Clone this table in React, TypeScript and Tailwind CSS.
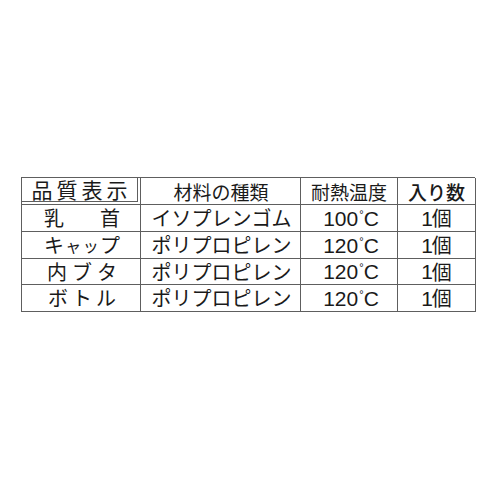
import React from "react";

const jp = "font-['Noto_Sans_CJK_JP',sans-serif]";
const num = "font-['Liberation_Sans','Noto_Sans_CJK_JP',sans-serif]";

const rows = [
  { name: ["乳", "首"], nameW: "w-[78px]", material: "イソプレンゴム", temp: "100" },
  { name: ["キ", "ャ", "ッ", "プ"], nameW: "w-[78px]", material: "ポリプロピレン", temp: "120" },
  { name: ["内", "ブ", "タ"], nameW: "w-[72px]", material: "ポリプロピレン", temp: "120" },
  { name: ["ボ", "ト", "ル"], nameW: "w-[70px]", material: "ポリプロピレン", temp: "120" },
];

const cell = "border-r border-b border-[#5e5e5e] flex items-center";

export default function App() {
  return (
    <div className="w-[500px] h-[500px] bg-white pt-[177px] pl-[21px]">
      <div
        className={`grid grid-cols-[119px_160px_97px_78px] grid-rows-[27px_27px_27px_26px_27px] w-[454px] border-t border-l border-[#5e5e5e] text-[#1a1a1a] ${jp}`}
      >
        {/* header */}
        <div className={`${cell} items-stretch`}>
          <div className="flex-1 mr-[2px] mb-[2px] border-r border-b border-[#5e5e5e] flex items-center justify-center text-[21px] tracking-[4px] pl-[4px] leading-none">
            品質表示
          </div>
        </div>
        <div className={`${cell} justify-center text-[19px] leading-none pl-[1px]`}>材料の種類</div>
        <div className={`${cell} justify-center text-[19px] leading-none`}>耐熱温度</div>
        <div className={`${cell} justify-center text-[19px] font-medium leading-none`}>
          入り数
        </div>

        {rows.map((r, i) => (
          <React.Fragment key={i}>
            <div className={`${cell} justify-center`}>
              <div className={`${r.nameW} flex justify-between items-center text-[20px] leading-none pl-[2px]`}>
                {r.name.map((c, j) => (
                  <span key={j} className={c === "ャ" || c === "ッ" ? "text-[16px]" : ""}>
                    {c}
                  </span>
                ))}
              </div>
            </div>
            <div className={`${cell} justify-center text-[20px] leading-none pl-[2px]`}>
              {r.material}
            </div>
            <div className={`${cell} justify-center leading-none pl-[4px]`}>
              <span className={`${num} text-[21px]`}>
                {r.temp}
                <span className="text-[11px] align-[8px] ml-[1px]">°</span>C
              </span>
            </div>
            <div className={`${cell} justify-center leading-none`}>
              <span className={`${num} text-[21px] tracking-[-1px]`}>1</span>
              <span className="text-[20px]">個</span>
            </div>
          </React.Fragment>
        ))}
      </div>
    </div>
  );
}
